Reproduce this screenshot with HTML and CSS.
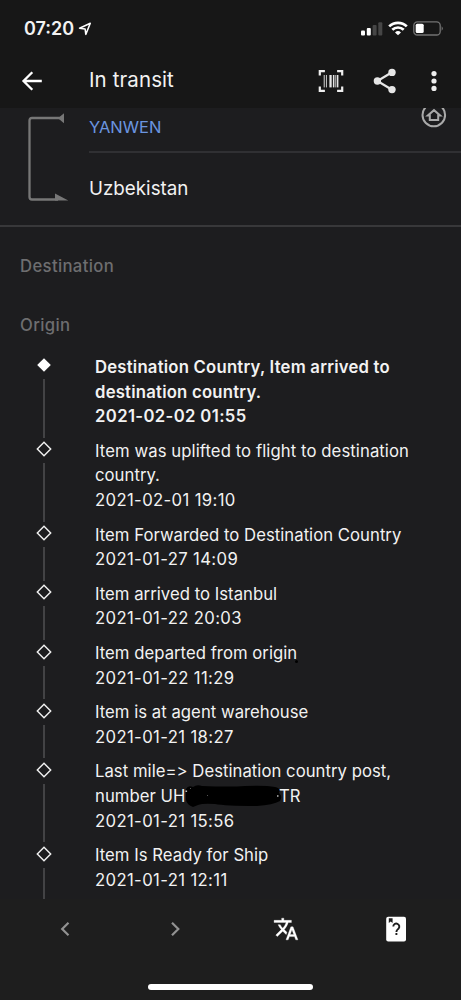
FILE: index.html
```
<!DOCTYPE html>
<html lang="en">
<head>
<meta charset="utf-8">
<title>In transit</title>
<link rel="stylesheet" href="styles.css">
</head>
<body>
<div class="phone">
  <header class="top">
    <div class="status">
      <span class="clock">07:20</span>
      <svg class="loc" width="14" height="14" viewBox="0 0 14 14"><path d="M1.5 6.2 12.3 1.3 7.8 12.4 7.1 6.9Z" fill="none" stroke="#fff" stroke-width="1.5" stroke-linejoin="round"/></svg>
      <svg class="signal" width="22" height="14" viewBox="0 0 22 14"><g fill="#fff"><rect x="0" y="8.5" width="4" height="5" rx="1"/><rect x="5.8" y="6" width="4" height="7.5" rx="1"/></g><g fill="#464646"><rect x="11.6" y="3" width="4" height="10.5" rx="1"/><rect x="17.3" y="0.3" width="4" height="13.2" rx="1"/></g></svg>
      <svg class="wifi" width="20" height="15" viewBox="0 0 20 15"><g fill="none" stroke="#fff" stroke-width="2.7"><path d="M1.2 5.4a12.6 12.6 0 0 1 17.6 0"/><path d="M4.3 8.8a8.2 8.2 0 0 1 11.4 0"/></g><path d="M10 14.3 7 11.4a4.4 4.4 0 0 1 6 0Z" fill="#fff"/></svg>
      <svg class="battery" width="31" height="15" viewBox="0 0 31 15"><rect x="0.8" y="0.8" width="26.4" height="13.2" rx="3.6" fill="none" stroke="#737373" stroke-width="1.3"/><rect x="2.7" y="2.8" width="8" height="9.3" rx="1.5" fill="#fff"/><path d="M28.6 5.3a2.6 2.6 0 0 1 0 4.4Z" fill="#737373"/></svg>
    </div>
    <div class="appbar">
      <svg class="back" width="22" height="22" viewBox="0 0 22 22"><path d="M11.3 2.2 2.5 11l8.8 8.8M2.5 11h18.3" fill="none" stroke="#fff" stroke-width="2.3"/></svg>
      <h1 class="title">In transit</h1>
      <svg class="scan" width="26" height="24" viewBox="0 0 26 24"><path d="M1.8 6.5V2.1h5.1M19.1 2.1h5.1v4.4M24.2 17.5v4.4h-5.1M6.9 21.9H1.8v-4.4" fill="none" stroke="#eee" stroke-width="2.2"/><g fill="#e6e6e6"><rect x="5.6" y="6" width="1.5" height="12.4" opacity=".65"/><rect x="8" y="6" width="1" height="12.4" opacity=".8"/><rect x="11.4" y="6" width="2.3" height="12.4"/><rect x="14.9" y="6" width="1.5" height="12.4"/><rect x="17.1" y="6" width=".9" height="12.4" opacity=".7"/><rect x="18.7" y="6" width="1.7" height="12.4"/></g></svg>
      <svg class="share" width="24" height="26" viewBox="0 0 24 26"><path d="M19 4.3 4.4 13 19 21.7" fill="none" stroke="#e6e6e6" stroke-width="2.2"/><g fill="#e6e6e6"><circle cx="19" cy="4.4" r="3.7"/><circle cx="4.4" cy="13" r="3.7"/><circle cx="19" cy="21.6" r="3.7"/></g></svg>
      <svg class="more" width="6" height="22" viewBox="0 0 6 22"><g fill="#eee"><circle cx="3" cy="3.6" r="2.6"/><circle cx="3" cy="11" r="2.6"/><circle cx="3" cy="18.4" r="2.6"/></g></svg>
    </div>
  </header>
  <main class="body">
    <section class="route">
      <svg class="bracket" width="42" height="92" viewBox="0 0 42 92"><path d="M34 5H5Q2.5 5 2.5 7.5V84Q2.5 86.5 5 86.5H31" fill="none" stroke="#777" stroke-width="2.3"/><path d="M31 5.2 37 .2V10.2ZM28 80.5 41.3 87.6H28Z" fill="#777"/></svg>
      <div class="places">
        <div class="carrier"><span>YANWEN</span>
          <svg class="home" width="26" height="20" viewBox="0 0 26 20"><circle cx="12.8" cy="7" r="11.3" fill="none" stroke="#aaa" stroke-width="2"/><path d="M6.8 7.6 13 2.2l6.2 5.4h-2V12H8.8V7.6Z" fill="none" stroke="#aaa" stroke-width="2"/></svg>
        </div>
        <div class="country">Uzbekistan</div>
      </div>
    </section>
    <h2 class="section">Destination</h2>
    <h2 class="section">Origin</h2>
    <ol class="events">
      <li class="event latest"><div class="rail"><svg class="mark" width="16" height="16" viewBox="0 0 16 16"><path d="M8 1.2 14.8 8 8 14.8 1.2 8Z" fill="#fff"/></svg><i class="line"></i></div><div class="text"><div>Destination Country, Item arrived to</div><div>destination country.</div><div class="date">2021-02-02 01:55</div></div></li>
      <li class="event"><div class="rail"><svg class="mark" width="16" height="16" viewBox="0 0 16 16"><path d="M8 1.3 14.7 8 8 14.7 1.3 8Z"/></svg><i class="line"></i></div><div class="text"><div class="wide">Item was uplifted to flight to destination</div><div>country.</div><div class="date">2021-02-01 19:10</div></div></li>
      <li class="event"><div class="rail"><svg class="mark" width="16" height="16" viewBox="0 0 16 16"><path d="M8 1.3 14.7 8 8 14.7 1.3 8Z"/></svg><i class="line"></i></div><div class="text"><div>Item Forwarded to Destination Country</div><div class="date">2021-01-27 14:09</div></div></li>
      <li class="event"><div class="rail"><svg class="mark" width="16" height="16" viewBox="0 0 16 16"><path d="M8 1.3 14.7 8 8 14.7 1.3 8Z"/></svg><i class="line"></i></div><div class="text"><div>Item arrived to Istanbul</div><div class="date">2021-01-22 20:03</div></div></li>
      <li class="event"><div class="rail"><svg class="mark" width="16" height="16" viewBox="0 0 16 16"><path d="M8 1.3 14.7 8 8 14.7 1.3 8Z"/></svg><i class="line"></i></div><div class="text"><div class="origin">Item departed from origin<i class="speck"></i></div><div class="date">2021-01-22 11:29</div></div></li>
      <li class="event"><div class="rail"><svg class="mark" width="16" height="16" viewBox="0 0 16 16"><path d="M8 1.3 14.7 8 8 14.7 1.3 8Z"/></svg><i class="line"></i></div><div class="text"><div>Item is at agent warehouse</div><div class="date">2021-01-21 18:27</div></div></li>
      <li class="event"><div class="rail"><svg class="mark" width="16" height="16" viewBox="0 0 16 16"><path d="M8 1.3 14.7 8 8 14.7 1.3 8Z"/></svg><i class="line"></i></div><div class="text"><div class="plain">Last mile=&gt; Destination country post,</div><div class="number"><span class="prefix">number UH</span><svg class="redact" width="98" height="24" viewBox="0 0 98 24"><path d="M1 5Q3 1 8 3Q12 0 17 2Q45 3 60 2Q80 1 90 3Q96 4 94 9Q98 12 95 17Q88 21 72 22Q40 22 30 20Q18 19 13 21L8 23Q2 21 1 16Z" fill="#000"/><path d="M.5 6.5h1.6v1.5H.5ZM92 11.3h1.5v1.5H92Z" fill="#bbb"/><path d="M5 4h1v1H5ZM22 11h1v1h-1Z" fill="#555"/></svg><span>TR</span></div><div class="date">2021-01-21 15:56</div></div></li>
      <li class="event"><div class="rail"><svg class="mark" width="16" height="16" viewBox="0 0 16 16"><path d="M8 1.3 14.7 8 8 14.7 1.3 8Z"/></svg><i class="line"></i></div><div class="text"><div>Item Is Ready for Ship</div><div class="date">2021-01-21 12:11</div></div></li>
    </ol>
  </main>
  <footer class="bottom">
    <nav class="tools">
      <svg width="14" height="16" viewBox="0 0 14 16"><path d="M10.5 1.7 4.2 8l6.3 6.3" fill="none" stroke="#929292" stroke-width="2.2"/></svg>
      <svg width="14" height="16" viewBox="0 0 14 16"><path d="M4 1.7 10.3 8 4 14.3" fill="none" stroke="#929292" stroke-width="2.2"/></svg>
      <svg width="26" height="26" viewBox="0 0 24 24"><path fill="#fff" stroke="#fff" stroke-width=".3" d="M12.87 15.07l-2.54-2.51.03-.03c1.74-1.94 2.98-4.17 3.71-6.53H17V4h-7V2H8v2H1v1.99h11.17C11.5 7.92 10.44 9.75 9 11.35 8.07 10.32 7.3 9.19 6.69 8h-2c.73 1.63 1.73 3.17 2.98 4.56l-5.09 5.02L4 19l5-5 3.11 3.11.76-2.04zM18.5 10h-2L12 22h2l1.12-3h4.75L21 22h2l-4.5-12zm-2.62 7l1.62-4.33L19.12 17h-3.24z"/></svg>
      <svg width="22" height="26" viewBox="0 0 22 26"><rect x="1.2" y=".7" width="19.8" height="24.8" rx="2" fill="#fff"/><path d="M3.8 2.2h3.8V7l-1.9-1.5L3.8 7Z" fill="#1e1e1e"/><path d="M8.3 10.6a3 3 0 1 1 5.1 2.1c-1.2 1.1-2 1.5-2 3.2M11.4 17v2" fill="none" stroke="#1e1e1e" stroke-width="1.9"/></svg>
    </nav>
    <div class="home-bar"></div>
  </footer>
</div>
</body>
</html>
```
FILE: styles.css
```
* { box-sizing: border-box; }
body { margin: 0; background: #1d1d1f; font-family: Inter, "Liberation Sans", sans-serif; color: #f2f2f2; }
.phone { width: 461px; height: 1000px; display: flex; flex-direction: column; overflow: hidden; }
svg { display: block; flex: none; }
.top { height: 108px; flex: none; background: #171717; }
.status { height: 54px; display: flex; align-items: center; padding: 3px 17px 0 24px; }
.clock { font-size: 18px; font-weight: 600; width: 54px; white-space: nowrap; }
.signal { margin-left: auto; }
.wifi { margin-left: 5px; }
.battery { margin-left: 5px; }
.appbar { height: 54px; display: flex; align-items: center; padding: 0 24px 0 21px; }
.title { margin: 0 auto 0 46px; padding-bottom: 2px; font-size: 20.5px; line-height: 24px; font-weight: 400; letter-spacing: .1px; }
.share { margin-left: 29px; }
.more { margin-left: 34px; }
.body { flex: 1; min-height: 0; overflow: hidden; }
.route { height: 119px; display: flex; border-bottom: 2px solid #38383a; padding-left: 26.5px; }
.bracket { margin-top: 4.5px; }
.places { flex: 1; margin-left: 20.5px; padding-left: 1px; }
.carrier { height: 45px; display: flex; justify-content: space-between; padding-right: 14px; border-bottom: 2px solid #303033; color: #6b95e0; font-size: 16.5px; line-height: 39px; }
.country { font-size: 18.8px; line-height: 72px; }
.places { padding-left: 0; }
.section { margin: 0; height: 59px; padding: 9px 20px 0; font-size: 16.7px; line-height: 60px; font-weight: 500; letter-spacing: .35px; color: #6e6e70; }
.events { list-style: none; margin: 9.9px 0 0; padding: 0; }
.event { display: flex; padding-left: 36px; }
.rail { width: 59px; display: flex; flex-direction: column; padding-top: 2.6px; }
.mark { fill: none; stroke: #f2f2f2; stroke-width: 1.4; }
.latest .mark { stroke: none; }
.line { flex: 1; width: 1.5px; margin: 6px 0 1px 7.3px; background: #434345; }
.text { font-size: 16.7px; line-height: 24.65px; padding-bottom: 9.9px; white-space: nowrap; letter-spacing: .03px; }
.date { letter-spacing: .36px; }
.wide { letter-spacing: .08px; }
.plain { font-feature-settings: "calt" 0; }
.latest { font-weight: 600; }
.latest .text { letter-spacing: .22px; }
.origin { position: relative; }
.speck { position: absolute; left: 200px; top: 19px; width: 3px; height: 3px; border-radius: 50%; background: #000; }
.number { display: flex; align-items: center; height: 24.65px; }
.prefix { width: 90px; }
.redact { margin-right: -4px; }
.bottom { height: 101px; flex: none; background: #1e1e1e; display: flex; flex-direction: column; align-items: center; justify-content: space-between; padding: 16px 0 10px; }
.tools { width: 100%; display: grid; grid-template-columns: repeat(4, 110.5px); justify-content: center; justify-items: center; align-items: center; height: 27px; }
.home-bar { width: 165px; height: 6px; border-radius: 3px; background: #fff; }
```
